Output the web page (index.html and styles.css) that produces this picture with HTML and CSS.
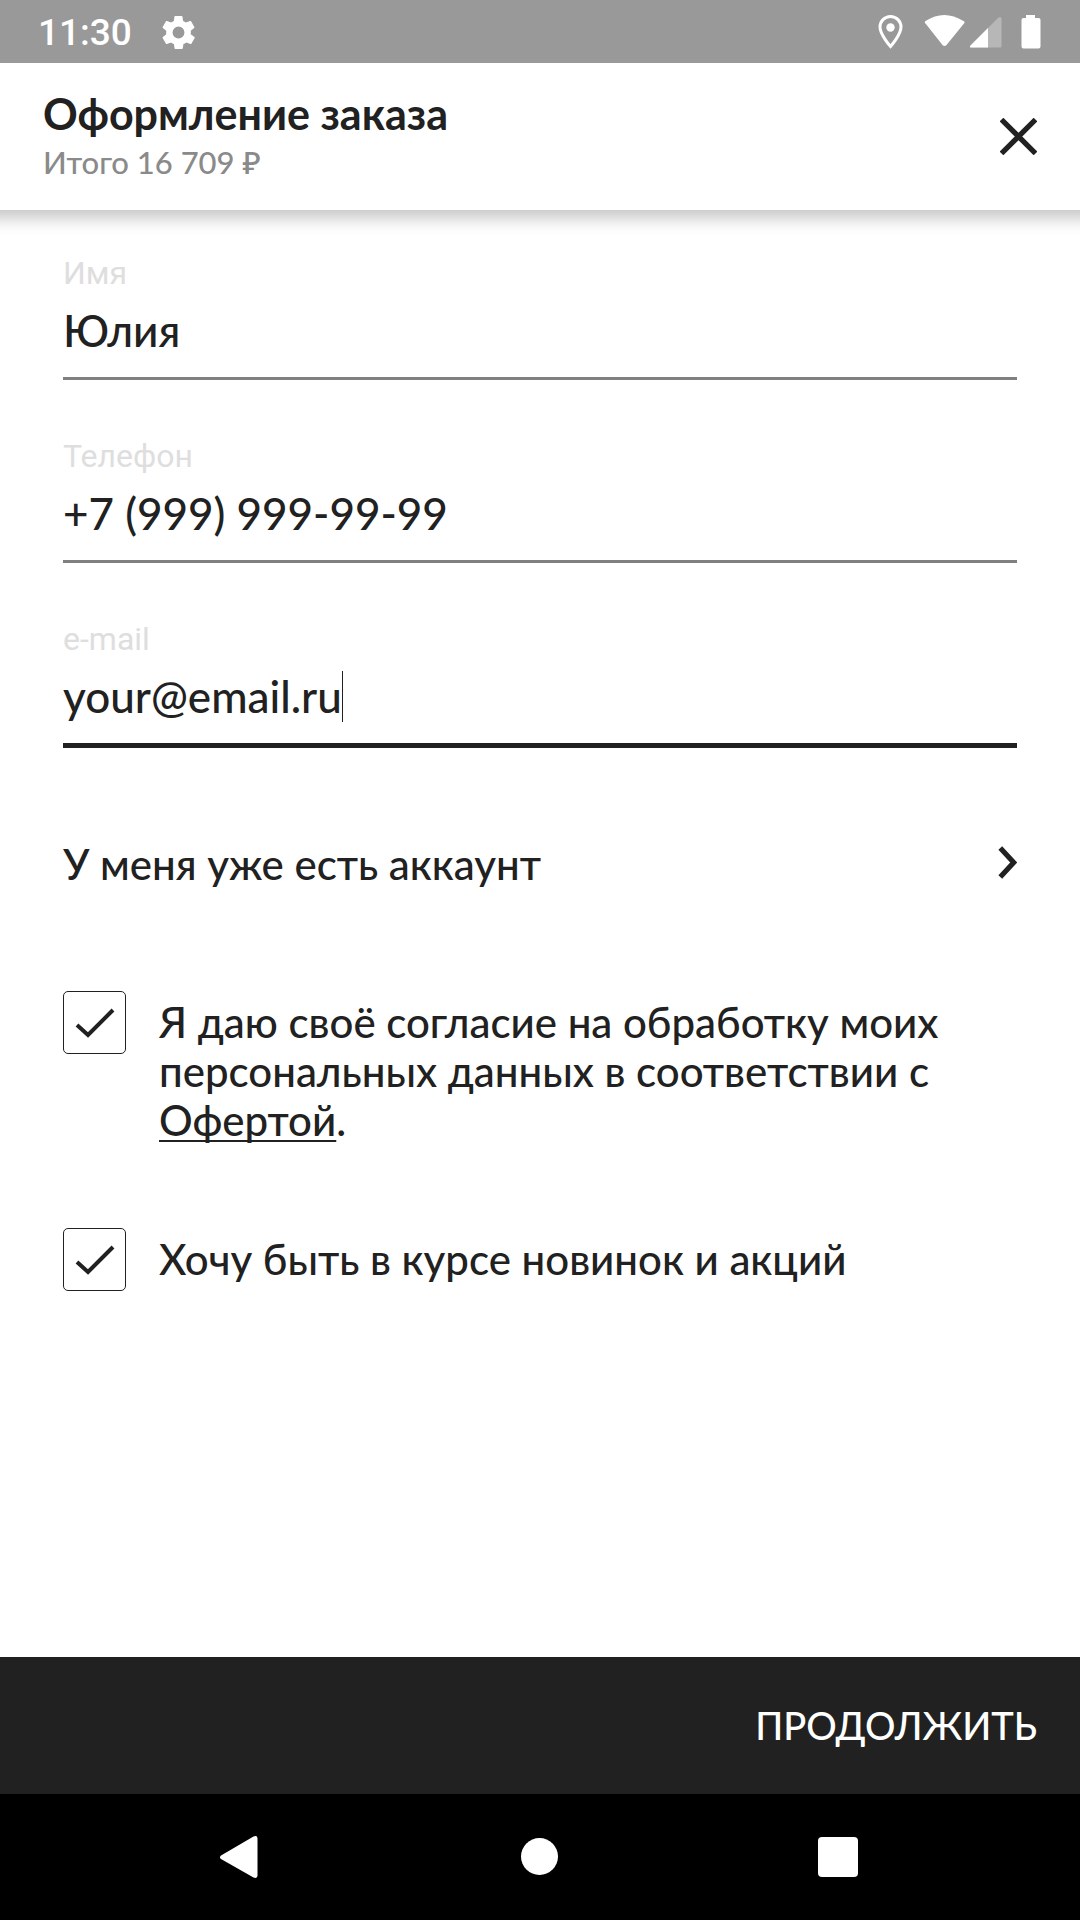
FILE: index.html
```html
<!DOCTYPE html>
<html lang="ru">
<head>
<meta charset="utf-8">
<meta name="viewport" content="width=device-width, initial-scale=1">
<title>Оформление заказа</title>
<link rel="stylesheet" href="styles.css">
</head>
<body>
<div class="screen">
  <div class="status">
    <div class="status-left">
      <span class="clock">11:30</span>
      <svg class="gear" viewBox="0 0 20 20" aria-hidden="true"><path fill-rule="evenodd" d="M17.4 11c0-.3.1-.7.1-1s0-.7-.1-1l2.100-1.700c.2-.1.200-.4.1-.6l-2-3.500c-.1-.2-.4-.3-.6-.2l-2.500 1c-.5-.4-1.100-.7-1.700-1L12.400.4c0-.2-.2-.4-.5-.4H8c-.2 0-.5.2-.5.4L7.200 3c-.6.300-1.200.600-1.700 1L3 3c-.2-.1-.5 0-.6.200l-2 3.500c-.1.200-.1.500.1.600L2.600 9c0 .3-.1.700-.1 1s0 .7.100 1L.5 12.700c-.2.100-.2.400-.1.600l2 3.500c.1.200.4.300.6.200l2.500-1c.5.400 1.100.7 1.700 1l.4 2.600c0 .2.200.4.500.4h4c.2 0 .5-.2.5-.4l.4-2.600c.6-.3 1.200-.6 1.700-1l2.500 1c.2.100.5 0 .6-.2l2-3.500c.1-.2.1-.5-.1-.6zM10 13.600a3.600 3.600 0 1 1 0-7.200 3.600 3.600 0 0 1 0 7.200z"/></svg>
    </div>
    <svg class="status-icons" viewBox="0 0 166 36" aria-hidden="true">
      <path d="M12.500 1.500C6.500 1.500 2 6.200 2 12c0 7.600 10.500 19.500 10.500 19.500S23 19.600 23 12C23 6.200 18.500 1.500 12.500 1.500z" fill="none" stroke="#fff" stroke-width="3"/>
      <circle cx="12.500" cy="12.500" r="4.200"/>
      <path d="M47.500 8.500Q46 7 47.500 6Q66-6 85.500 6Q87.500 7 86 8.500L68.500 30Q66.500 32 64.500 30z"/>
      <path opacity=".3" d="M93 32.500Q91.500 32.500 92 31L120.500 2.500Q123 1 123.500 3.500V31Q123.500 32.500 122 32.500z"/>
      <path d="M93 32.500Q91.500 32.500 92 31L110 13V32.500z"/>
      <path d="M148 0h9v3h3.500q2 0 2 2v26.500q0 2-2 2h-15q-2 0-2-2V5q0-2 2-2h2.500z"/>
    </svg>
  </div>

  <header class="header">
    <div>
      <h1 class="title">Оформление заказа</h1>
      <p class="total">Итого 16 709 ₽</p>
    </div>
    <button class="close" type="button" aria-label="Закрыть">
      <svg viewBox="0 0 36 36" aria-hidden="true"><path d="M1.500 1.500l33 33M34.500 1.500l-33 33" stroke="currentColor" stroke-width="5"/></svg>
    </button>
  </header>

  <form class="form" id="order">
    <div class="field">
      <label class="label" for="name">Имя</label>
      <div class="line"><input class="input" id="name" type="text" value="Юлия"></div>
    </div>
    <div class="field">
      <label class="label" for="phone">Телефон</label>
      <div class="line"><input class="input" id="phone" type="tel" value="+7 (999) 999-99-99"></div>
    </div>
    <div class="field">
      <label class="label" for="email">e-mail</label>
      <div class="line line-active"><input class="input input-fit" id="email" type="text" inputmode="email" size="12" value="your@email.ru"><span class="caret"></span></div>
    </div>

    <button class="account" type="button">
      <span>У меня уже есть аккаунт</span>
      <svg class="chevron" viewBox="0 0 18 32" aria-hidden="true"><path d="M2 2l13 14L2 30" fill="none" stroke="currentColor" stroke-width="5"/></svg>
    </button>

    <div class="check-row">
      <input class="check" id="consent" type="checkbox" checked>
      <label class="check-text" for="consent">Я даю своё согласие на обработку моих персональных данных в соответствии с <a class="link" href="#offer">Офертой</a>.</label>
    </div>
    <div class="check-row">
      <input class="check" id="news" type="checkbox" checked>
      <label class="check-text" for="news">Хочу быть в курсе новинок и акций</label>
    </div>
  </form>

  <div class="footer">
    <button class="next" type="submit" form="order">ПРОДОЛЖИТЬ</button>
  </div>

  <nav class="nav" aria-label="Система">
    <button class="nav-button" type="button" aria-label="Назад"><svg viewBox="0 0 44 44" aria-hidden="true"><path d="M1 20.500L33.500 1.500q4-1.500 4 2v37q0 3.500-4 2L1 24q-2-1.800 0-3.500z"/></svg></button>
    <button class="nav-button" type="button" aria-label="Домой"><svg viewBox="0 0 44 44" aria-hidden="true"><circle cx="21.500" cy="21.500" r="18.500"/></svg></button>
    <button class="nav-button" type="button" aria-label="Недавние"><svg viewBox="0 0 44 44" aria-hidden="true"><rect x="2" y="2" width="40" height="40" rx="4"/></svg></button>
  </nav>
</div>
</body>
</html>
```

FILE: styles.css
```css
* {
  box-sizing: border-box;
}

body {
  margin: 0;
  background: #fff;
  color: #212121;
  font-family: "Lato", "Noto Sans", sans-serif;
  font-size: 42px;
  font-weight: 500;
  line-height: 49px;
}

button,
input {
  margin: 0;
  padding: 0;
  border: 0;
  background: none;
  color: inherit;
  font: inherit;
}

svg {
  display: block;
}

.screen {
  display: flex;
  flex-direction: column;
  min-height: 100vh;
}

.status {
  display: flex;
  justify-content: space-between;
  align-items: center;
  height: 63px;
  padding: 2px 36px 0 38px;
  background: #999;
  color: #fff;
  fill: #fff;
}

.status-left {
  display: flex;
  align-items: center;
  gap: 30px;
}

.clock {
  font-family: Roboto, sans-serif;
  font-size: 37px;
}

.gear {
  width: 33px;
  height: 33px;
}

.status-icons {
  width: 166px;
  height: 36px;
}

.header {
  display: flex;
  justify-content: space-between;
  align-items: center;
  height: 147px;
  padding: 0 43px;
  box-shadow: 0 -12px 16px 20px rgba(0, 0, 0, 0.23);
  clip-path: inset(0 0 -30px 0);
}

.title {
  margin: 0;
  padding-top: 3px;
  font-size: 43px;
  font-weight: 700;
}

.total {
  margin: 0;
  color: #8a8a8a;
  font-size: 31px;
}

.close svg {
  width: 37px;
  height: 37px;
}

.form {
  flex: 1;
  padding: 42px 63px;
}

.field {
  height: 183px;
}

.label {
  display: block;
  color: #dedede;
  font-family: Roboto, sans-serif;
  font-size: 32px;
  font-weight: 400;
  line-height: 42px;
}

.line {
  display: flex;
  align-items: center;
  height: 86px;
  padding-bottom: 10px;
  border-bottom: 3px solid #808080;
}

.line-active {
  height: 88px;
  border-bottom: 5px solid #212121;
}

.input {
  width: 100%;
  height: 49px;
  outline: none;
  font-size: 44px;
}

.input-fit {
  width: auto;
  field-sizing: content;
}

.caret {
  width: 1px;
  height: 51px;
  background: #212121;
}

.account {
  display: flex;
  justify-content: space-between;
  align-items: center;
  width: 100%;
  margin: 39px 0 102px;
  text-align: left;
}

.chevron {
  width: 19px;
  height: 33px;
  margin-bottom: 4px;
}

.check-row {
  display: flex;
  gap: 33px;
  margin-bottom: 83px;
}

.check {
  flex: none;
  appearance: none;
  width: 63px;
  height: 63px;
  border: 1px solid #212121;
  border-radius: 5px;
  background: url("data:image/svg+xml,%3Csvg xmlns='http://www.w3.org/2000/svg' viewBox='0 0 61 61'%3E%3Cpath d='M13 33l11 10 25-25' fill='none' stroke='%23212121' stroke-width='4'/%3E%3C/svg%3E");
}

.check:not(:checked) {
  background: none;
}

.check-text {
  padding-top: 7px;
}

.link {
  color: inherit;
  text-decoration-thickness: 2px;
  text-decoration-skip-ink: none;
  text-underline-offset: 4px;
}

.footer {
  display: flex;
  justify-content: flex-end;
  height: 137px;
  padding: 0 43px;
  background: #212121;
  color: #fff;
}

.next {
  font-size: 38px;
}

.nav {
  display: flex;
  justify-content: center;
  align-items: center;
  gap: 254px;
  height: 126px;
  background: #000;
}

.nav-button svg {
  width: 44px;
  height: 44px;
  fill: #fff;
}
```
